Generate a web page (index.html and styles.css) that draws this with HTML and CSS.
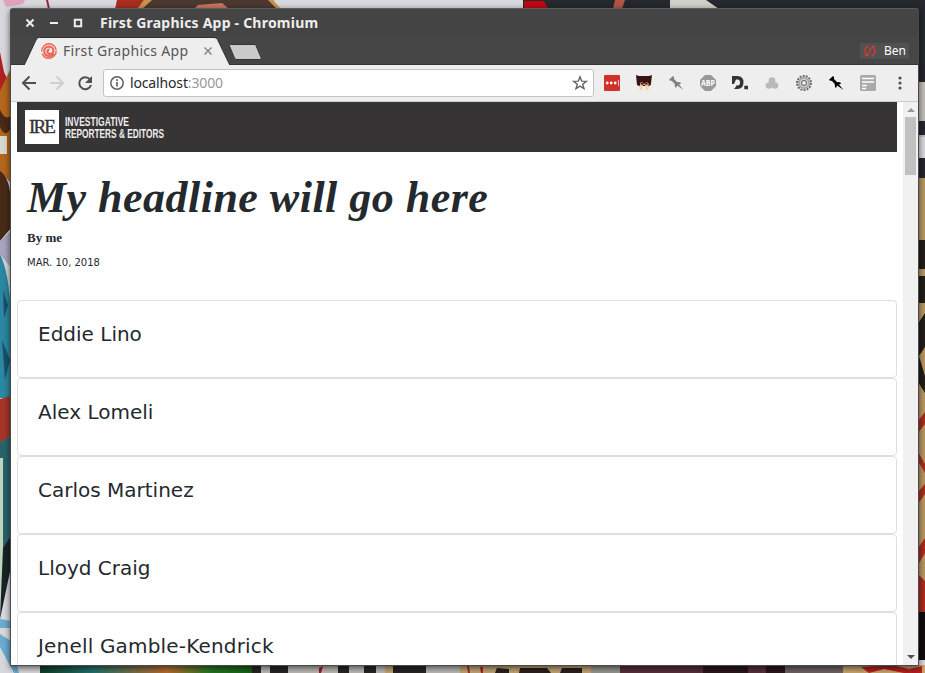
FILE: index.html
```
<!DOCTYPE html>
<html lang="en">
<head>
<meta charset="utf-8">
<title>First Graphics App</title>
<link rel="stylesheet" href="styles.css">
</head>
<body>
<svg class="wallpaper" viewBox="0 0 925 673" aria-hidden="true">
  <defs><linearGradient id="paint"><stop stop-color="#123b24"/><stop offset=".25" stop-color="#24706a"/><stop offset=".6" stop-color="#b66b2d"/><stop offset=".8" stop-color="#277522"/><stop offset="1" stop-color="#175f16"/></linearGradient></defs>
  <path fill="#d8d8dc" d="M0 0h925v673H0z"/>
  <path fill="#dfa3bd" d="M3 0h22l-2 4-17 3z"/><path fill="#8e263e" d="M46 0h2l2 9h-2z"/>
  <path fill="#a92c20" d="M117 0h27l-5 9h-24z"/><path fill="#4b3830" d="M145 0h128l6 9H138z"/><path fill="#c7755b" d="M198 5l24-2 7 6h-35z"/><path fill="#c7934c" d="M144 0h8l-10 9h-5zM268 0h5l8 9h-4z"/>
  <path fill="#25282c" d="M523 0h402v62H918V9H523z"/><path fill="#c10712" d="M524 1h20l4 8h-24z"/><path fill="#b45443" d="M615 0h10l-3 9h-9z"/><path fill="#d0cfca" d="M670 0h36l13 9h-49z"/>
  <path fill="#b01f23" d="M0 52l4 20 7 15v12L0 106z"/><path fill="#b4661c" d="M0 91l11-23v115L0 172z"/><path fill="#482a18" d="M0 110q6 12 11 5v13Q5 139 0 127zM0 171q11 7 11 36v21l-11 13z"/><path fill="#d8d9ce" d="M0 136h7v18H0z"/>
  <path fill="#a7a2be" d="M0 241l11-10v37L0 254z"/><path fill="#2b87a2" d="M0 254q9 18 11 60v84H0z"/><path fill="#185269" d="M3 290l5 15-4 13zM2 340l8 20-5 20z"/>
  <path fill="#a53527" d="M0 399l11-3v40l-11 7z"/><path fill="#28636b" d="M0 442l11-6v101l-11 26z"/><path fill="#c0d4be" d="M0 458h3v113l-3 48z"/><path fill="#172326" d="M3 548l8-12v31L0 619z"/>
  <path fill="#6aabd0" d="M0 619l11 2v7H0zM0 634l11 7 8 32h-5L0 647z"/>
  <path fill="#c1beb9" d="M918 82h7v55h-7z"/><path fill="#252530" d="M918 61h7v21h-7zM918 121h7v14h-7zM918 158h7v20h-7z"/><path fill="#b69662" d="M918 178h7v454h-7z"/><path fill="#211d18" d="M918 240h7v29h-7zM918 276h7v27h-7zM919 322l6-9v34l-6 9 6 20v17l-7-11z"/>
  <path fill="#a92b20" d="M918 421l7-9v12l-7 9zM918 452l7 12v9l-7-12zM918 492l7-8v10l-7 10zM918 548l7-10v15l-7 12zM918 574l7 7v31h-7z"/><path fill="#100b0c" d="M918 612h7v48h-7z"/>
  <path fill="url(#paint)" d="M40 665h212v8H40z"/><path fill="#272422" d="M252 665h208v8H252z"/><path fill="#bbb8b4" d="M261 665h9v8h-9zM288 665h50v8h-50zM349 665h15v8h-15zM376 665h9v8h-9zM426 665h34v8h-34z"/><path fill="#a01822" d="M319 668l4-2-2 7h-2z"/>
  <path fill="#c1a374" d="M385 665h8v8h-8zM460 665h131v8H460z"/><path fill="#28201b" d="M497 668l12 1v4h-14zM520 668h27l4 5h-32zM562 668h20v5h-22z"/><path fill="#a22a22" d="M467 666h2l1 7h-2zM480 667h3v6h-2z"/>
  <path fill="#969590" d="M591 665h29v8h-29z"/><path fill="#562f37" d="M620 665h165v8H620z"/><path fill="#27171b" d="M703 665h45v8h-45zM766 665h19v8h-19z"/><path fill="#6c6260" d="M785 665h58v8h-58z"/><path fill="#c6a36b" d="M843 665h82v8h-82z"/><path fill="#b31f20" d="M861 667l31-2 17 4 13-3v7h-18l-20-4-15 4z"/>
</svg>

<main class="window">
  <header class="titlebar">
    <div class="controls">
      <svg width="60" height="12" viewBox="0 0 60 12" fill="none" stroke="#eee" stroke-width="2"><path d="M1.5 2.500l7 7m0-7l-7 7M25 6h8"/><path d="M49.800 2.800h6.400v6.400h-6.400z"/></svg>
    </div>
    <span class="window-title">First Graphics App - Chromium</span>
  </header>
  <div class="tabs">
    <svg class="tab-shape" width="250" height="28" viewBox="0 0 250 28"><path fill="#eee" stroke="#303030" d="M13 28.500L25.500 2Q26.500.500 28.500.500H203q2.500 0 3.500 2L219 28.500"/><path fill="#cacaca" stroke="#353535" d="M219.500 7.500H243q1.500 0 2 1l5 12q1 2-1 2h-23q-2 0-2.500-1.500l-5-12q-.500-1.500 1-1.500z"/></svg>
    <div class="tab">
      <svg width="16" height="16" viewBox="0 0 16 16" fill="none" stroke="#ed6253"><circle cx="8" cy="8" r="7.200" stroke-width="1.400" stroke-dasharray="20 2 22 1.200"/><path stroke-width="2" d="M13 11Q11 13.500 8 13.200 3 12.500 3.200 8 3.500 4 7.800 3.500q4.700.2 4.700 4.500-.5 3-3.500 3-2.800-.3-2.600-3 .5-1.700 2.200-1.400"/></svg>
      <span class="tab-title">First Graphics App</span>
      <svg class="tab-close" width="8" height="8" viewBox="0 0 8 8" stroke="#888" stroke-width="1.500"><path d="M.5.500l7 7m0-7l-7 7"/></svg>
    </div>
    <div class="profile"><svg width="12" height="12" viewBox="0 0 12 12" fill="none" stroke="#d93a2b" stroke-width="1.400"><path d="M4.500 1Q1 2 1 6q0 2 2 4M1 10.500h3V8M7.500 11Q11 10 11 6q0-2-2-4M11 1.500H8V4" stroke-dasharray="3 .5"/><path d="M6 3v4m0 1v1.200"/></svg><span>Ben</span></div>
  </div>
  <nav class="toolbar">
    <svg class="nav-icons" width="72" height="16" viewBox="0 0 72 16" fill="none" stroke-width="2"><path stroke="#505050" d="M15 8H2m6.500-6.500L2 8l6.500 6.500"/><path stroke="#cfcfcf" d="M29 8h13m-6.500-6.500L42 8l-6.500 6.500"/><path stroke="#505050" d="M69 4.500A6 6 0 1 0 70 10"/><path fill="#505050" stroke="none" d="M71 1v7h-7z"/></svg>
    <div class="address">
      <svg width="14" height="14" viewBox="0 0 14 14" fill="none" stroke="#606060" stroke-width="1.500"><circle cx="7" cy="7" r="6.200"/><path d="M7 6v4.500M7 3.300v1.600" stroke-width="1.700"/></svg>
      <span class="url">localhost<span>:3000</span></span>
      <svg class="star" width="16" height="16" viewBox="0 0 16 16" fill="none" stroke="#666" stroke-width="1.400"><path d="M8 1.800l1.700 4.300 4.700.2-3.700 2.900 1.300 4.500L8 11.200l-4 2.500 1.300-4.500-3.700-2.900 4.700-.2z"/></svg>
    </div>
    <div class="extensions">
      <svg viewBox="0 0 16 16"><rect width="16" height="16" rx="1" fill="#d4302b"/><g fill="#fff"><circle cx="3.200" cy="8" r="1.400"/><circle cx="7.200" cy="8" r="1.400"/><circle cx="11.200" cy="8" r="1.400"/><path d="M14 5h.7v6H14z"/></g></svg>
      <svg viewBox="0 0 16 16"><path fill="#351511" d="M0 0l3 1h10l3-1-1.200 10-2 1H3l-2-1z"/><path fill="#d99b80" d="M4 8l2-1 2 2 3-2 2 2-1 2H4z"/><path fill="#351511" d="M5 8h2v1.500H5zM9.500 8h2v1.500h-2zM7 10h2v1H7z"/><path fill="#f7d3b4" d="M3 11l2-1 2 2-1 4-3-2zM13 11l-2-1-2 2 1 4 3-2z"/></svg>
      <svg viewBox="0 0 16 16"><path fill="#808080" d="M5 1l1 1v2l3 3 3 .3L13.200 8.500l-2.200 1 4.500 5.500L9.200 10.500 8 13 7 12l-.3-3L4 6 1.700 5.500 1 4.800z"/></svg>
      <svg viewBox="0 0 16 16"><path fill="#999" d="M5 0h6l5 5v6l-5 5H5l-5-5V5z"/><text class="badge-text" x="8" y="11" textLength="14" lengthAdjust="spacingAndGlyphs">ABP</text></svg>
      <svg viewBox="0 0 16 16"><path fill="#333" fill-rule="evenodd" d="M0 1h5.500Q11.500 1 11.500 7.500T5.500 14H2l2-2.500V4.500H4L2 9 0 9zM4 4.500v6h1.500q2.500 0 2.500-3t-2.500-3z"/><path fill="#333" d="M12.300 10.700H16v3.600h-3.700z"/></svg>
      <svg viewBox="0 0 16 16" fill="#b9b9b9"><circle cx="8" cy="5.500" r="3.300"/><circle cx="5" cy="10.500" r="3.300"/><circle cx="11" cy="10.500" r="3.300"/><path d="M6 7h4v4H6z"/></svg>
      <svg viewBox="0 0 16 16" fill="none"><circle cx="8" cy="8" r="7" stroke="#6a6a6a" stroke-width="2" stroke-dasharray="2 1.140"/><circle cx="8" cy="8" r="5.200" fill="#d5d5d5" stroke="#a5a5a5" stroke-width="1.800"/><circle cx="8" cy="8" r="2.700" fill="#c4c4c4" stroke="#777"/><circle cx="8" cy="8" r="1.200" fill="#f5f5f5"/></svg>
      <svg viewBox="0 0 16 16"><path fill="#050505" d="M5 1l1 1v2l3 3 3 .3L13.200 8.500l-2.200 1 4.500 5.500L9.200 10.500 8 13 7 12l-.3-3L4 6 1.700 5.500 1 4.800z"/></svg>
      <svg viewBox="0 0 16 16"><rect width="16" height="16" rx="1.500" fill="#aaa"/><path stroke="#fff" stroke-width="1.500" d="M2 3.500h12M2 7h12M2 10.500h5M2 13.500h4"/></svg>
    </div>
    <svg class="menu-icon" width="4" height="14" viewBox="0 0 4 14" fill="#505050"><circle cx="2" cy="2" r="1.600"/><circle cx="2" cy="7" r="1.600"/><circle cx="2" cy="12" r="1.600"/></svg>
  </nav>
  <div class="viewport">
    <article class="page">
      <div class="brand"><div class="brand-mark"><span>IRE</span></div><svg class="brand-name" width="120" height="34" viewBox="0 0 120 34"><text transform="scale(1 1.200)" x="0" y="13.100" textLength="64" lengthAdjust="spacingAndGlyphs">INVESTIGATIVE</text><text transform="scale(1 1.200)" x="0" y="23.200" textLength="99" lengthAdjust="spacingAndGlyphs">REPORTERS &amp; EDITORS</text></svg></div>
      <div class="story"><h1>My headline will go here</h1><p class="byline">By me</p><p class="date">MAR. 10, 2018</p></div>
      <section class="cards"><div class="card">Eddie Lino</div><div class="card">Alex Lomeli</div><div class="card">Carlos Martinez</div><div class="card">Lloyd Craig</div><div class="card wide">Jenell Gamble-Kendrick</div></section>
    </article>
    <div class="scrollbar"><i class="arrow up"></i><i class="thumb"></i><i class="arrow down"></i></div>
  </div>
</main>
</body>
</html>
```
FILE: styles.css
```
* { box-sizing: border-box; }
body { margin: 0; width: 925px; height: 673px; overflow: hidden; padding: 8px 6px 7px 10px; font-family: "DejaVu Sans", sans-serif; color: #24292e; }
svg { display: block; flex: none; }
.wallpaper { position: absolute; inset: 0; width: 925px; height: 673px; }
.window { position: relative; width: 909px; height: 658px; border: 1px solid #484a4b; border-top-color: #5c5b57; border-radius: 3px 3px 0 0; overflow: hidden; box-shadow: 0 2px 6px #0009; background: #444; display: flex; flex-direction: column; }
.titlebar { height: 28px; flex: none; display: flex; align-items: center; padding-left: 14px; background: #444; }
.window-title { font: 700 14px/28px "Noto Sans", sans-serif; letter-spacing: .22px; color: #eee; margin-left: 15px; white-space: nowrap; }
.tabs { height: 28px; flex: none; display: flex; align-items: center; position: relative; background: #464646; border-bottom: 1px solid #353535; }
.tab-shape { position: absolute; left: 0; top: 0; }
.tab { position: relative; display: flex; align-items: center; width: 214px; padding-left: 30px; }
.tab-title { margin-left: 6px; width: 125px; font: 14px/20px "Noto Sans", sans-serif; letter-spacing: .32px; color: #555; white-space: nowrap; }
.tab-close { margin-left: 16px; }
.profile { margin-left: auto; margin-right: 9px; width: 49px; height: 16px; padding-left: 4px; display: flex; align-items: center; gap: 8px; background: #515151; font: 12px/16px "Noto Sans", sans-serif; color: #fff; }
.toolbar { height: 37px; flex: none; background: #eee; border-bottom: 1px solid #ccc; display: flex; align-items: center; padding-left: 10px; }
.address { width: 491px; height: 28px; margin-left: 10px; border: 1px solid #c3c3c3; border-radius: 3px; background: #fff; display: flex; align-items: center; padding: 0 5px 0 6px; }
.url { margin-left: 6px; font: 14px/24px "Noto Sans", sans-serif; letter-spacing: -.15px; }
.url span { color: #999; }
.star { margin-left: auto; }
.extensions { display: flex; gap: 16px; margin-left: 10px; }
.extensions svg { width: 16px; height: 16px; }
.badge-text { font: bold 8px "Open Sans", sans-serif; fill: #fff; text-anchor: middle; }
.menu-icon { margin-left: 22px; }
.viewport { height: 563px; display: flex; background: #fff; overflow: hidden; }
.page { width: 892px; padding: 0 6px; overflow: hidden; }
.brand { height: 50px; background: #373435; padding: 8px; display: flex; }
.brand-mark { width: 34px; height: 34px; background: #fff; color: #373435; display: flex; align-items: center; justify-content: center; font: 19px/34px "Liberation Serif", serif; letter-spacing: -1.8px; -webkit-text-stroke: .4px #373435; }
.brand-mark span { padding-right: 1px; }
.brand-name { margin: 0 0 0 6px; font: bold 10px "Liberation Sans", sans-serif; fill: #eee; }
.story { height: 148px; padding: 22px 10px 0; }
h1 { margin: 0; font: italic bold 44px/48px "Liberation Serif", serif; letter-spacing: .48px; white-space: nowrap; }
.byline { margin: 6px 0 0; font: bold 13px/20px "Liberation Serif", serif; }
.date { margin: 7px 0 0; font-size: 10px; line-height: 16px; }
.card { height: 78px; padding: 20px; border: 1px solid #dfdfdf; border-radius: 4px; font-size: 20px; line-height: 26px; white-space: nowrap; }
.wide { letter-spacing: .18px; }
.scrollbar { width: 15px; background: #f1f1f1; display: flex; flex-direction: column; align-items: center; }
.arrow { width: 0; height: 0; border: 4px solid transparent; border-top-width: 0; border-bottom: 4px solid #999; margin: 6px 0 5px; }
.thumb { width: 11px; height: 58px; background: #c1c1c1; }
.down { margin: auto 0 6px; border-bottom: 0; border-top: 4px solid #505050; }
```
